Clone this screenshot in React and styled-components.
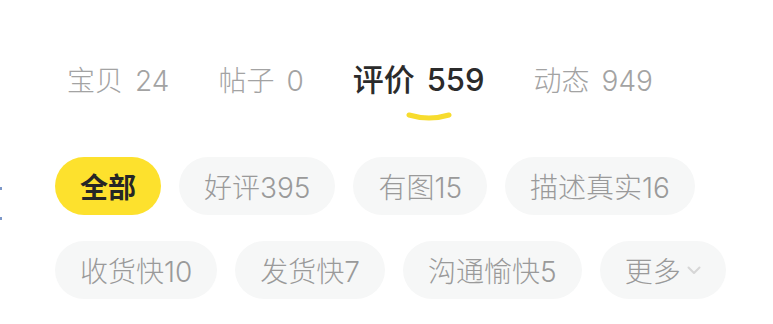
import styled, { createGlobalStyle } from 'styled-components';

const GlobalStyle = createGlobalStyle`
  html, body {
    margin: 0;
    padding: 0;
    background: #ffffff;
  }
  body {
    font-family: Inter, "Noto Sans CJK SC", sans-serif;
  }
`;

const Page = styled.div`
  position: relative;
  width: 773px;
  height: 324px;
  overflow: hidden;
  background: #fff;
`;

// little cut-off mark at the left edge of the screenshot
const EdgeDot = styled.span`
  position: absolute;
  left: 0;
  top: ${(p) => p.top}px;
  width: 2px;
  height: 3px;
  background: #7c97c8;
`;

const TabBar = styled.div`
  display: flex;
  align-items: baseline;
  gap: 49px;
  height: 32px;
  padding: 64px 0 0 67px;
`;

const Tab = styled.div`
  position: relative;
  display: flex;
  align-items: baseline;
  gap: 12px;
  font-size: ${(p) => (p.active ? 31 : 28)}px;
  line-height: 32px;
  color: ${(p) => (p.active ? '#2b2b2b' : '#a3a3a3')};
  font-weight: ${(p) => (p.active ? 500 : 300)};
  white-space: nowrap;
`;

const Underline = styled.svg`
  position: absolute;
  left: 53px;
  top: 48px;
`;

const Chips = styled.div`
  display: flex;
  flex-wrap: wrap;
  gap: 26px 18px;
  width: 700px;
  padding: 61px 0 0 55px;
`;

const Chip = styled.div`
  display: flex;
  align-items: center;
  gap: 6px;
  height: 58px;
  padding: 0 25px;
  border-radius: 29px;
  background: ${(p) => (p.active ? '#fde12d' : '#f6f7f7')};
  color: ${(p) => (p.active ? '#262626' : '#9a9a9a')};
  font-size: 28px;
  font-weight: ${(p) => (p.active ? 700 : 300)};
  white-space: nowrap;
  box-sizing: border-box;
`;

const tabs = [
  { label: '宝贝', count: 24 },
  { label: '帖子', count: 0 },
  { label: '评价', count: 559, active: true },
  { label: '动态', count: 949 },
];

const filters = [
  { label: '全部', active: true },
  { label: '好评395' },
  { label: '有图15' },
  { label: '描述真实16' },
  { label: '收货快10' },
  { label: '发货快7' },
  { label: '沟通愉快5' },
  { label: '更多', more: true },
];

function Chevron() {
  return (
    <svg width="14" height="9" viewBox="0 0 14 9" fill="none">
      <path d="M1.5 1.5 L7 7 L12.5 1.5" stroke="#d6d6d6" strokeWidth="2" strokeLinecap="round" strokeLinejoin="round" />
    </svg>
  );
}

export default function App() {
  return (
    <Page>
      <GlobalStyle />
      <EdgeDot top={187} />
      <EdgeDot top={217} />
      <TabBar>
        {tabs.map((t) => (
          <Tab key={t.label} active={t.active}>
            <span>{t.label}</span>
            <span>{t.count}</span>
            {t.active && (
              <Underline width="46" height="10" viewBox="0 0 46 10">
                <path d="M3 3 Q23 9 43 3" stroke="#f7dc2e" strokeWidth="5" strokeLinecap="round" fill="none" />
              </Underline>
            )}
          </Tab>
        ))}
      </TabBar>
      <Chips>
        {filters.map((f) => (
          <Chip key={f.label} active={f.active}>
            {f.label}
            {f.more && <Chevron />}
          </Chip>
        ))}
      </Chips>
    </Page>
  );
}
